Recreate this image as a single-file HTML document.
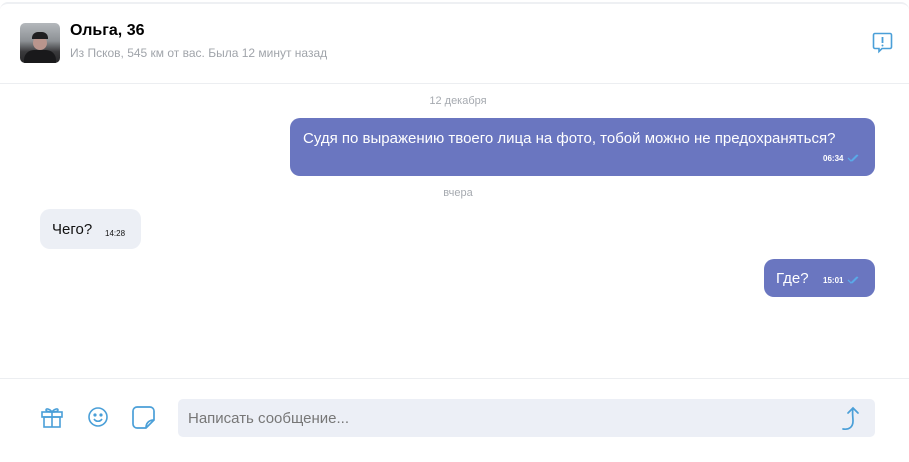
<!DOCTYPE html>
<html><head><meta charset="utf-8"><style>
*{margin:0;padding:0;box-sizing:border-box}
body{width:909px;height:450px;background:#fff;font-family:"Liberation Sans",Arial,sans-serif;position:relative;overflow:hidden}
.card{position:absolute;left:0;top:2px;width:909px;height:460px;border-top:2px solid #eef0f3;border-radius:8px}
.abs{position:absolute}
.b{position:absolute;border-radius:10px;color:#fff;background:#6a76c0;font-size:15px}
.t{font-size:8px;font-weight:bold;position:absolute}
</style></head><body>
<div class="card"></div>
<div class="abs" style="left:20px;top:23px;width:40px;height:40px;border-radius:5px;background:linear-gradient(180deg,#b4b8bc 0%,#8d9195 45%,#3a3a3c 72%,#262628 100%);overflow:hidden">
<div class="abs" style="left:13px;top:13px;width:14px;height:14px;border-radius:50%;background:#b9958d"></div>
<div class="abs" style="left:12px;top:9px;width:16px;height:7px;border-radius:6px 6px 0 0;background:#1f1f21"></div>
<div class="abs" style="left:4px;top:27px;width:32px;height:14px;border-radius:10px 10px 0 0;background:#19191b"></div>
</div>
<div class="abs" style="left:70px;top:22px;font-size:16px;font-weight:bold;color:#000">Ольга, 36</div>
<div class="abs" style="left:70px;top:46px;font-size:12px;color:#a0a4aa">Из Псков, 545 км от вас. Была 12 минут назад</div>
<svg class="abs" style="left:872px;top:32px" width="22" height="22" viewBox="0 0 22 22"><path d="M3 1.5h15a1.5 1.5 0 0 1 1.5 1.5v12a1.5 1.5 0 0 1-1.5 1.5h-8l-3 3v-3H3A1.5 1.5 0 0 1 1.5 15V3A1.5 1.5 0 0 1 3 1.5z" fill="none" stroke="#4a9fd8" stroke-width="1.6"/><path d="M10.5 5v6" stroke="#4a9fd8" stroke-width="1.8"/><circle cx="10.5" cy="13.5" r="1" fill="#4a9fd8"/></svg>
<div class="abs" style="left:0;top:83px;width:909px;height:1px;background:#eceef1"></div>
<div class="abs" style="left:0;top:95px;width:916px;text-align:center;font-size:11px;color:#a6aab0">12 декабря</div>
<div class="b" style="left:290px;top:118px;width:585px;height:58px"><div class="abs" style="left:13px;top:12px">Судя по выражению твоего лица на фото, тобой можно не предохраняться?</div><div class="t" style="left:533px;top:36px">06:34</div><svg class="abs" style="left:557px;top:35px" width="14" height="10"><path d="M1 5l3 3 6-6M5 8l6-6" fill="none" stroke="#5aa9e8" stroke-width="1.3"/></svg></div>
<div class="abs" style="left:0;top:187px;width:916px;text-align:center;font-size:11px;color:#a6aab0">вчера</div>
<div class="b" style="left:40px;top:209px;width:101px;height:40px;background:#eceff5;color:#111"><div class="abs" style="left:12px;top:12px">Чего?</div><div class="t" style="left:65px;top:20px;font-weight:normal;font-size:8px">14:28</div></div>
<div class="b" style="left:764px;top:259px;width:111px;height:38px"><div class="abs" style="left:12px;top:11px">Где?</div><div class="t" style="left:59px;top:17px">15:01</div><svg class="abs" style="left:83px;top:16px" width="14" height="10"><path d="M1 5l3 3 6-6M5 8l6-6" fill="none" stroke="#5aa9e8" stroke-width="1.3"/></svg></div>
<div class="abs" style="left:0;top:378px;width:909px;height:1px;background:#eceef1"></div>
<svg class="abs" style="left:40px;top:405px" width="24" height="24" viewBox="0 0 24 24" fill="none" stroke="#4a9fd8" stroke-width="1.6"><rect x="2" y="7" width="20" height="5"/><rect x="4" y="12" width="16" height="10"/><path d="M12 7v15M12 7c-2-3-6-4-6-2s6 2 6 2c2-3 6-4 6-2s-6 2-6 2"/></svg>
<svg class="abs" style="left:87px;top:406px" width="22" height="22" viewBox="0 0 22 22" fill="none" stroke="#4a9fd8" stroke-width="1.6"><circle cx="11" cy="11" r="9"/><circle cx="8" cy="9" r=".8" fill="#4a9fd8"/><circle cx="14" cy="9" r=".8" fill="#4a9fd8"/><path d="M7 13c2 3 6 3 8 0"/></svg>
<svg class="abs" style="left:131px;top:405px" width="26" height="26" viewBox="0 0 26 26" fill="none" stroke="#4a9fd8" stroke-width="1.7"><path d="M15 23H6a4 4 0 0 1-4-4V6a4 4 0 0 1 4-4h13a4 4 0 0 1 4 4v9zM15 23c0-5 3-8 8-8"/></svg>
<div class="abs" style="left:178px;top:399px;width:697px;height:38px;border-radius:5px;background:#eceff6"><div class="abs" style="left:10px;top:11px;font-size:15px;color:#777">Написать сообщение...</div>
<svg class="abs" style="left:662px;top:5px" width="26" height="28" viewBox="0 0 26 28" fill="none" stroke="#4a9fd8" stroke-width="1.7" stroke-linecap="round"><path d="M3 25c6 1 10-2 10-8 0-4-1-8 0-13M8 9l5-5 5 5"/></svg></div>
</body></html>
